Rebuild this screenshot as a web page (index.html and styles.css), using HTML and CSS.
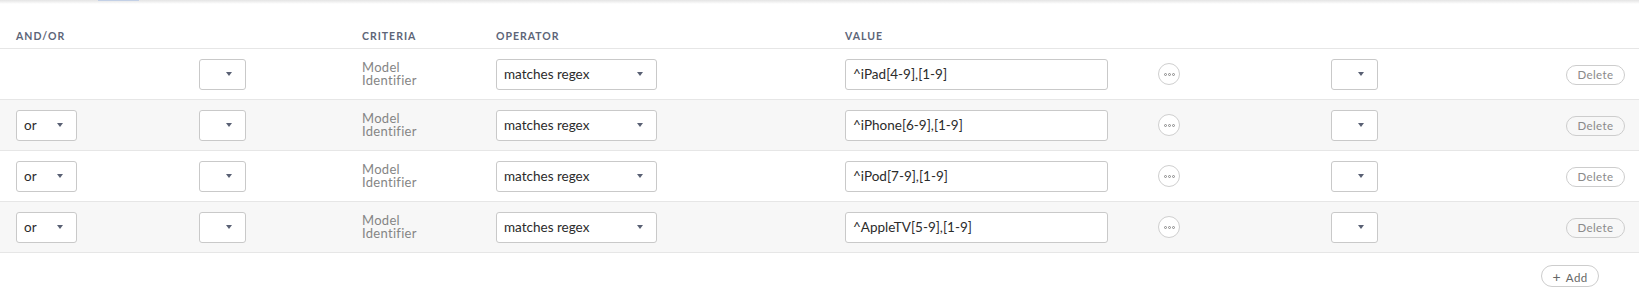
FILE: index.html
```html
<!DOCTYPE html>
<html lang="en">
<head>
  <meta charset="UTF-8">
  <meta name="viewport" content="width=device-width, initial-scale=1.0">
  <title>Smart Group Criteria</title>
  <link rel="stylesheet" href="styles.css">
</head>
<body>

<div class="tab-bar">
  <div class="tab-active"></div>
</div>

<div class="criteria-table">
  <div class="row head">
    <div class="cell">And/Or</div>
    <div class="cell"></div>
    <div class="cell">Criteria</div>
    <div class="cell">Operator</div>
    <div class="cell">Value</div>
    <div class="cell"></div>
    <div class="cell"></div>
    <div class="cell"></div>
  </div>

  <!-- first row has no and/or select -->
  <div class="row">
    <div class="cell"></div>
    <div class="cell"><div class="select small"><span></span><i class="caret"></i></div></div>
    <div class="cell criteria">Model<br>Identifier</div>
    <div class="cell"><div class="select operator"><span>matches regex</span><i class="caret"></i></div></div>
    <div class="cell"><div class="value-input">^iPad[4-9],[1-9]</div></div>
    <div class="cell"><button class="more-btn"><i></i><i></i><i></i></button></div>
    <div class="cell"><div class="select small"><span></span><i class="caret"></i></div></div>
    <div class="cell"><button class="pill-btn">Delete</button></div>
  </div>

  <div class="row alt">
    <div class="cell"><div class="select andor"><span>or</span><i class="caret"></i></div></div>
    <div class="cell"><div class="select small"><span></span><i class="caret"></i></div></div>
    <div class="cell criteria">Model<br>Identifier</div>
    <div class="cell"><div class="select operator"><span>matches regex</span><i class="caret"></i></div></div>
    <div class="cell"><div class="value-input">^iPhone[6-9],[1-9]</div></div>
    <div class="cell"><button class="more-btn"><i></i><i></i><i></i></button></div>
    <div class="cell"><div class="select small"><span></span><i class="caret"></i></div></div>
    <div class="cell"><button class="pill-btn">Delete</button></div>
  </div>

  <div class="row">
    <div class="cell"><div class="select andor"><span>or</span><i class="caret"></i></div></div>
    <div class="cell"><div class="select small"><span></span><i class="caret"></i></div></div>
    <div class="cell criteria">Model<br>Identifier</div>
    <div class="cell"><div class="select operator"><span>matches regex</span><i class="caret"></i></div></div>
    <div class="cell"><div class="value-input">^iPod[7-9],[1-9]</div></div>
    <div class="cell"><button class="more-btn"><i></i><i></i><i></i></button></div>
    <div class="cell"><div class="select small"><span></span><i class="caret"></i></div></div>
    <div class="cell"><button class="pill-btn">Delete</button></div>
  </div>

  <div class="row alt">
    <div class="cell"><div class="select andor"><span>or</span><i class="caret"></i></div></div>
    <div class="cell"><div class="select small"><span></span><i class="caret"></i></div></div>
    <div class="cell criteria">Model<br>Identifier</div>
    <div class="cell"><div class="select operator"><span>matches regex</span><i class="caret"></i></div></div>
    <div class="cell"><div class="value-input">^AppleTV[5-9],[1-9]</div></div>
    <div class="cell"><button class="more-btn"><i></i><i></i><i></i></button></div>
    <div class="cell"><div class="select small"><span></span><i class="caret"></i></div></div>
    <div class="cell"><button class="pill-btn">Delete</button></div>
  </div>
</div>

<div class="table-footer">
  <button class="pill-btn add-btn"><b>+</b> Add</button>
</div>

</body>
</html>
```

FILE: styles.css
```css
body {
  margin: 0;
  background: #fff;
  font-family: Lato, "Open Sans", Arial, sans-serif;
  color: #2b2b2b;
}

/* remains of the tab strip scrolled above */
.tab-bar {
  height: 4px;
  background: linear-gradient(#e4e4e4, #fff);
}

.tab-active {
  margin-left: 98px;
  width: 41px;
  height: 1px;
  background: #c3d0e6;
}

.row {
  display: grid;
  grid-template-columns: 183px 163px 134px 349px 313px 173px 235px 59px;
  padding: 0 14px 0 16px;
  height: 50px;
  align-items: center;
  border-bottom: 1px solid #e6e6e6;
}

.row.alt {
  background: #f7f7f7;
}

.row.head {
  height: 44px;
  align-items: start;
}

.row.head .cell {
  padding-top: 26px;
  font-size: 10.5px;
  line-height: 13px;
  font-weight: 700;
  letter-spacing: 1px;
  text-transform: uppercase;
  color: #5d6578;
}

.criteria {
  font-size: 13px;
  line-height: 13px;
  letter-spacing: 0.3px;
  color: #858585;
  padding-bottom: 1px;
}

.select,
.value-input {
  box-sizing: border-box;
  height: 31px;
  background: #fff;
  border: 1px solid #c9c9c9;
  border-radius: 3px;
  font-size: 13.5px;
  display: flex;
  align-items: center;
  padding: 0 7px;
}

.select span {
  flex: 1;
}

.select.small {
  width: 47px;
  padding-right: 13px;
}

.select.andor {
  width: 61px;
  padding-right: 13px;
}

.select.operator {
  width: 161px;
  padding-right: 13px;
}

.value-input {
  width: 263px;
}

.caret {
  width: 0;
  height: 0;
  border-left: 3.5px solid transparent;
  border-right: 3.5px solid transparent;
  border-top: 4px solid #596073;
}

.more-btn {
  width: 22px;
  height: 22px;
  padding: 0;
  border: 1px solid #cfcfcf;
  border-radius: 50%;
  background: #fff;
  display: flex;
  align-items: center;
  justify-content: center;
  gap: 1px;
}

.more-btn i {
  box-sizing: border-box;
  width: 3px;
  height: 3px;
  border: 1px solid #8a8a8a;
  border-radius: 50%;
}

.pill-btn {
  box-sizing: border-box;
  width: 59px;
  height: 20px;
  padding: 0;
  border: 1px solid #cdcdcd;
  border-radius: 10px;
  background: #fff;
  font-family: inherit;
  font-size: 11.5px;
  color: #8a8a8a;
  letter-spacing: 0.4px;
}

.row.alt .pill-btn {
  background: #f7f7f7;
}

.table-footer {
  display: flex;
  justify-content: flex-end;
  padding: 12px 40px 0 0;
}

.add-btn {
  width: 58px;
  height: 22px;
  border-radius: 11px;
  font-size: 11.5px;
  color: #666;
}

.add-btn b {
  font-weight: 400;
  font-size: 14px;
  margin-right: 2px;
}
```
